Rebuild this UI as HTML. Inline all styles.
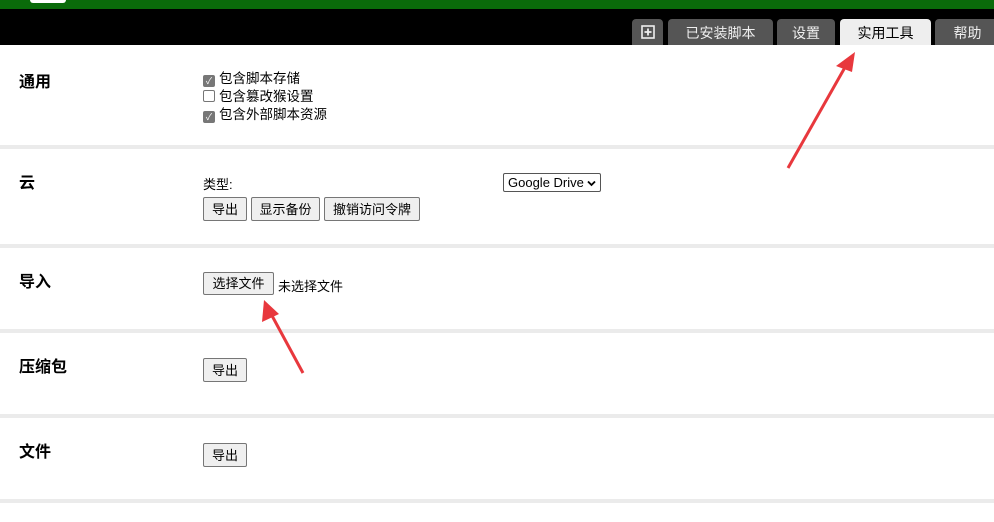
<!DOCTYPE html>
<html><head><meta charset="utf-8"><style>
body{margin:0;width:994px;height:522px;background:#fff;position:relative;overflow:hidden;font-family:"Liberation Sans","Noto Sans CJK SC",sans-serif;font-size:13px;color:#000}
.a{position:absolute}
.tab{position:absolute;top:19px;height:26px;background:#555;color:#eee;font-size:14px;line-height:28px;text-align:center;border-radius:4px 4px 0 0}
.sep{position:absolute;left:0;width:994px;height:4px;background:#ebebeb}
.h{position:absolute;left:19px;font-size:16px;font-weight:bold;line-height:18px}
.btn{position:absolute;height:24px;border:1px solid #767676;border-radius:2px;background:#efefef;font-size:13px;line-height:24px;text-align:center;box-sizing:border-box}
.cb{display:inline-block;width:12px;height:12px;border:1px solid #767676;border-radius:2px;vertical-align:-1px;margin-right:4px;box-sizing:border-box}
.cb.on{background:#777;border-color:#777;color:#fff;font-size:9px;line-height:11px;text-align:center}
</style></head><body>
<div class="a" style="left:0;top:0;width:994px;height:9px;background:#0a6b0a"></div>
<div class="a" style="left:30px;top:0;width:36px;height:3px;background:#fff;border-radius:0 0 4px 4px"></div>
<div class="a" style="left:0;top:9px;width:994px;height:36px;background:#000"></div>
<div class="tab" style="left:632px;width:31px"><svg width="14" height="14" viewBox="0 0 14 14" style="margin-top:6px"><rect x="1" y="1" width="12" height="12" fill="none" stroke="#eee" stroke-width="1.6"/><path d="M7 3.5v7M3.5 7h7" stroke="#eee" stroke-width="1.8"/></svg></div>
<div class="tab" style="left:668px;width:105px">已安装脚本</div>
<div class="tab" style="left:777px;width:58px">设置</div>
<div class="tab" style="left:840px;width:91px;background:#eee;color:#000">实用工具</div>
<div class="tab" style="left:935px;width:65px">帮助</div>

<div class="h" style="top:74px">通用</div>
<div class="a" style="left:203px;top:70px;line-height:18px;font-size:13.5px">
<div><span class="cb on">✓</span>包含脚本存储</div>
<div><span class="cb"></span>包含篡改猴设置</div>
<div><span class="cb on">✓</span>包含外部脚本资源</div>
</div>
<div class="sep" style="top:145px"></div>

<div class="h" style="top:175px">云</div>
<div class="a" style="left:203px;top:174px">类型:</div>
<div class="a" style="left:503px;top:173px;width:98px;height:19px;border:1px solid #555;border-radius:2px;font-size:13px;line-height:17px;padding-left:4px;box-sizing:border-box">Google Drive <svg width="9" height="7" viewBox="0 0 9 7"><path d="M1 1.5l3.5 3.5 3.5-3.5" fill="none" stroke="#000" stroke-width="1.8"/></svg></div>
<div class="btn" style="left:203px;top:197px;width:44px">导出</div>
<div class="btn" style="left:251px;top:197px;width:69px">显示备份</div>
<div class="btn" style="left:324px;top:197px;width:96px">撤销访问令牌</div>
<div class="sep" style="top:244px"></div>

<div class="h" style="top:274px">导入</div>
<div class="btn" style="left:203px;top:272px;width:71px;height:23px;line-height:22px">选择文件</div>
<div class="a" style="left:278px;top:276px">未选择文件</div>
<div class="sep" style="top:329px"></div>

<div class="h" style="top:359px">压缩包</div>
<div class="btn" style="left:203px;top:358px;width:44px">导出</div>
<div class="sep" style="top:414px"></div>

<div class="h" style="top:444px">文件</div>
<div class="btn" style="left:203px;top:443px;width:44px">导出</div>
<div class="sep" style="top:499px"></div>

<svg class="a" style="left:0;top:0" width="994" height="522">
<path d="M788 168 L848 62" stroke="#e8383d" stroke-width="3"/>
<polygon points="855,52 836,66 852,72" fill="#e8383d"/>
<path d="M303 373 L270 312" stroke="#e8383d" stroke-width="3"/>
<polygon points="264,300 262,322 279,314" fill="#e8383d"/>
</svg>
</body></html>
